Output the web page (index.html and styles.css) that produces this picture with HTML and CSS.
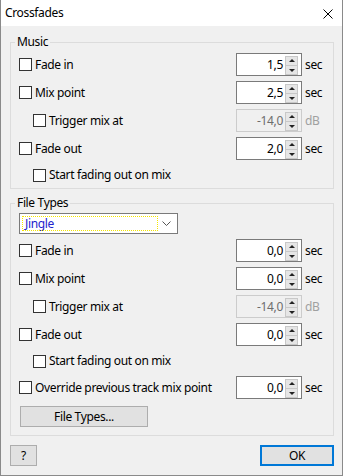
FILE: index.html
```html
<!DOCTYPE html>
<html lang="en">
<head>
    <meta charset="UTF-8">
    <meta name="viewport" content="width=device-width, initial-scale=1.0">
    <title>Crossfades</title>
    <link rel="stylesheet" href="styles.css">
</head>
<body>
    <div class="window">
        <div class="titlebar">
            <span class="title">Crossfades</span>
            <svg class="close" width="10" height="10" viewBox="0 0 10 10">
                <path d="M0.5 0.5 L9.5 9.5 M9.5 0.5 L0.5 9.5" stroke="#000" stroke-width="1" fill="none"/>
            </svg>
        </div>

        <div class="content">
            <fieldset class="group music">
                <legend>Music</legend>
                <div class="row">
                    <label class="check"><span class="box"></span>Fade in</label>
                    <div class="spin"><span class="value">1,5</span><span class="arrows"><i class="up"></i><i class="down"></i></span></div>
                    <span class="unit">sec</span>
                </div>
                <div class="row">
                    <label class="check"><span class="box"></span>Mix point</label>
                    <div class="spin"><span class="value">2,5</span><span class="arrows"><i class="up"></i><i class="down"></i></span></div>
                    <span class="unit">sec</span>
                </div>
                <div class="row">
                    <label class="check indent"><span class="box"></span>Trigger mix at</label>
                    <div class="spin disabled"><span class="value">-14,0</span><span class="arrows"><i class="up"></i><i class="down"></i></span></div>
                    <span class="unit disabled">dB</span>
                </div>
                <div class="row">
                    <label class="check"><span class="box"></span>Fade out</label>
                    <div class="spin"><span class="value">2,0</span><span class="arrows"><i class="up"></i><i class="down"></i></span></div>
                    <span class="unit">sec</span>
                </div>
                <div class="row short">
                    <label class="check indent"><span class="box"></span>Start fading out on mix</label>
                </div>
            </fieldset>

            <fieldset class="group types">
                <legend>File Types</legend>
                <div class="combo">
                    <span class="combo-text"><span class="focus">Jingle</span></span>
                    <svg class="chevron" width="9" height="5" viewBox="0 0 9 5">
                        <path d="M0.5 0.5 L4.5 4.5 L8.5 0.5" stroke="#555" stroke-width="1" fill="none"/>
                    </svg>
                </div>
                <div class="row">
                    <label class="check"><span class="box"></span>Fade in</label>
                    <div class="spin"><span class="value">0,0</span><span class="arrows"><i class="up"></i><i class="down"></i></span></div>
                    <span class="unit">sec</span>
                </div>
                <div class="row">
                    <label class="check"><span class="box"></span>Mix point</label>
                    <div class="spin"><span class="value">0,0</span><span class="arrows"><i class="up"></i><i class="down"></i></span></div>
                    <span class="unit">sec</span>
                </div>
                <div class="row">
                    <label class="check indent"><span class="box"></span>Trigger mix at</label>
                    <div class="spin disabled"><span class="value">-14,0</span><span class="arrows"><i class="up"></i><i class="down"></i></span></div>
                    <span class="unit disabled">dB</span>
                </div>
                <div class="row">
                    <label class="check"><span class="box"></span>Fade out</label>
                    <div class="spin"><span class="value">0,0</span><span class="arrows"><i class="up"></i><i class="down"></i></span></div>
                    <span class="unit">sec</span>
                </div>
                <div class="row short">
                    <label class="check indent"><span class="box"></span>Start fading out on mix</label>
                </div>
                <div class="row">
                    <label class="check"><span class="box"></span>Override previous track mix point</label>
                    <div class="spin"><span class="value">0,0</span><span class="arrows"><i class="up"></i><i class="down"></i></span></div>
                    <span class="unit">sec</span>
                </div>
                <button class="btn types-btn">File Types...</button>
            </fieldset>

            <div class="footer">
                <button class="btn help">?</button>
                <button class="btn ok">OK</button>
            </div>
        </div>
    </div>
</body>
</html>
```

FILE: styles.css
```css
* {
    margin: 0;
    padding: 0;
    box-sizing: border-box;
    font-family: "Noto Sans", "Open Sans", Arial, sans-serif;
    letter-spacing: -0.35px;
}

body {
    width: 343px;
    height: 476px;
    background-color: #f0f0f0;
    font-size: 12px;
    color: #000;
}

.window {
    width: 343px;
    height: 476px;
    border: 1px solid #8a8a8a;
    border-top: none;
    background-color: #f0f0f0;
    display: flex;
    flex-direction: column;
}

.titlebar {
    height: 26px;
    background-color: white;
    display: flex;
    align-items: center;
    justify-content: space-between;
    padding: 0 9px 0 4px;
    flex-shrink: 0;
}

.title {
    font-size: 12px;
    line-height: 16px;
    margin-top: -1px;
}

.close {
    display: block;
    margin-top: 1px;
}

.content {
    padding: 8px 8px 0 9px;
    display: flex;
    flex-direction: column;
}

.group {
    border: 1px solid #dcdcdc;
    padding: 3px 4px 3px 8px;
    min-inline-size: 0;
    display: flex;
    flex-direction: column;
    gap: 5px;
}

.group legend {
    padding: 0 2px;
    margin-left: -4px;
    line-height: 16px;
    height: 16px;
}

.types {
    margin-top: 6px;
    padding-top: 2px;
    padding-bottom: 8px;
}

.row {
    display: flex;
    align-items: center;
    height: 23px;
}

.row.short {
    height: 20px;
}

.check {
    flex: 1;
    display: flex;
    align-items: center;
    line-height: 16px;
    white-space: nowrap;
}

.check.indent {
    padding-left: 14px;
}

.box {
    width: 13px;
    height: 13px;
    border: 1px solid #333;
    background-color: white;
    margin-right: 3px;
    flex-shrink: 0;
}

.spin {
    width: 66px;
    height: 23px;
    border: 1px solid #7a7a7a;
    background-color: white;
    display: flex;
    align-items: center;
    justify-content: flex-end;
    padding: 0 3px 0 0;
}

.spin .value {
    line-height: 16px;
    margin-right: 2px;
}

.spin.disabled {
    border-color: #cccccc;
    background-color: #f0f0f0;
    color: #6d6d6d;
}

.arrows {
    width: 13px;
    height: 19px;
    display: flex;
    flex-direction: column;
    margin-top: 1px;
}

.arrows i {
    flex: 1;
    position: relative;
    background-color: #e6e6e6;
    border: 1px solid #c8c8c8;
}

.arrows i + i {
    border-top: none;
}

.arrows i::after {
    content: "";
    position: absolute;
    left: 3px;
    border-left: 3px solid transparent;
    border-right: 3px solid transparent;
}

.arrows .up::after {
    top: 2px;
    border-bottom: 3px solid #222;
}

.arrows .down::after {
    top: 3px;
    border-top: 3px solid #222;
}

.unit {
    width: 24px;
    margin-left: 3px;
    line-height: 16px;
}

.unit.disabled {
    color: #a0a0a0;
}

.combo {
    width: 159px;
    height: 21px;
    margin-left: 0;
    border: 1px solid #7a7a7a;
    background-color: white;
    display: flex;
    align-items: center;
    justify-content: space-between;
    padding: 0 6px 0 2px;
    flex-shrink: 0;
}

.combo-text {
    width: 136px;
    height: 15px;
    border: 1px dotted #000;
    outline: 1px dotted #f5e600;
    outline-offset: -1px;
    display: flex;
    align-items: center;
    padding-left: 2px;
}

.focus {
    color: #2222cc;
    line-height: 14px;
}

.chevron {
    display: block;
}

.btn {
    height: 21px;
    background-color: #e1e1e1;
    border: 1px solid #adadad;
    font-size: 12px;
    line-height: 16px;
    color: #000;
}

.types-btn {
    width: 128px;
    margin-top: 2px;
    margin-left: 1px;
}

.footer {
    display: flex;
    justify-content: space-between;
    margin-top: 9px;
}

.help {
    width: 27px;
}

.ok {
    width: 74px;
    border: 2px solid #0078d7;
}
```
